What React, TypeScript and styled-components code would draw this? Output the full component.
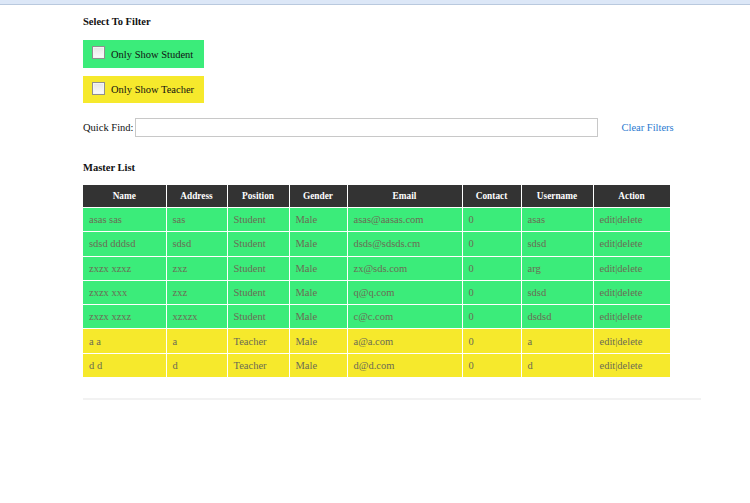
import React from "react";
import styled, { createGlobalStyle } from "styled-components";

const Global = createGlobalStyle`
  html, body { margin: 0; padding: 0; background: #fff; }
  body { font-family: "Liberation Serif", "Times New Roman", serif; color: #111; }
`;

const TopBar = styled.div`
  height: 4px;
  background: #dce7f7;
  border-bottom: 1px solid #b9c9de;
`;

const Page = styled.div`
  padding: 10px 0 0 83px;
  width: 618px;
`;

const Heading = styled.div`
  font-weight: bold;
  font-size: 10.5px;
  line-height: 14px;
  height: 14px;
`;

const FilterBox = styled.label<{ $bg: string; $h: number; $mt: number }>`
  display: flex;
  align-items: center;
  width: 121px;
  height: ${(p) => p.$h}px;
  background: ${(p) => p.$bg};
  margin-top: ${(p) => p.$mt}px;
  box-sizing: border-box;
  padding-left: 9px;
  font-size: 10.5px;
`;

const Check = styled.span`
  width: 11px;
  height: 11px;
  border: 1px solid #8f8f8f;
  background: linear-gradient(#e6e6e6, #fbfbfb);
  box-shadow: inset 0 0 0 1px #f4f4f4;
  margin-right: 6px;
  margin-top: -3px;
`;

const FindRow = styled.div`
  display: flex;
  align-items: center;
  margin-top: 14px;
  height: 20px;
  font-size: 10.5px;
`;

const FindInput = styled.div`
  width: 461px;
  height: 17px;
  border: 1px solid #c8c8c8;
  margin-left: 2px;
  background: #fff;
`;

const ClearLink = styled.a`
  margin-left: 23px;
  color: #2a7ad0;
  font-size: 10.5px;
  text-decoration: none;
  margin-top: 1px;
`;

const ListHeading = styled(Heading)`
  margin-top: 24px;
`;

const Table = styled.table`
  margin-top: 10px;
  border-collapse: collapse;
  width: 587px;
  table-layout: fixed;
  font-size: 10.5px;
`;

const Th = styled.th`
  background: #333;
  color: #fff;
  font-weight: bold;
  font-size: 9.3px;
  height: 22px;
  padding: 0;
  border: 1px solid #fff;
  border-top: none;
  text-align: center;
  &:first-child { border-left: none; }
`;

const Tr = styled.tr<{ $bg: string }>`
  background: ${(p) => p.$bg};
`;

const Td = styled.td`
  height: 23.3px;
  padding: 0 0 0 6px;
  color: #6b6b55;
  border: 1px solid #fff;
  white-space: nowrap;
  overflow: hidden;
  &:first-child { border-left: none; }
`;

const Rule = styled.div`
  margin-top: 20px;
  width: 618px;
  height: 2px;
  background: #f2f2f2;
`;

const GREEN = "#3bec7a";
const YELLOW = "#f6e92c";

const cols = [
  ["Name", 83],
  ["Address", 61],
  ["Position", 62],
  ["Gender", 58],
  ["Email", 115],
  ["Contact", 59],
  ["Username", 72],
  ["Action", 77],
] as const;

const rows = [
  ["asas sas", "sas", "Student", "Male", "asas@aasas.com", "0", "asas"],
  ["sdsd dddsd", "sdsd", "Student", "Male", "dsds@sdsds.cm", "0", "sdsd"],
  ["zxzx xzxz", "zxz", "Student", "Male", "zx@sds.com", "0", "arg"],
  ["zxzx xxx", "zxz", "Student", "Male", "q@q.com", "0", "sdsd"],
  ["zxzx xzxz", "xzxzx", "Student", "Male", "c@c.com", "0", "dsdsd"],
  ["a a", "a", "Teacher", "Male", "a@a.com", "0", "a"],
  ["d d", "d", "Teacher", "Male", "d@d.com", "0", "d"],
];

export default function App() {
  return (
    <>
      <Global />
      <TopBar />
      <Page>
        <Heading>Select To Filter</Heading>
        <FilterBox $bg={GREEN} $h={28} $mt={11}>
          <Check />
          Only Show Student
        </FilterBox>
        <FilterBox $bg={YELLOW} $h={27} $mt={8}>
          <Check />
          Only Show Teacher
        </FilterBox>
        <FindRow>
          Quick Find:
          <FindInput />
          <ClearLink href="#">Clear Filters</ClearLink>
        </FindRow>
        <ListHeading>Master List</ListHeading>
        <Table>
          <colgroup>
            {cols.map(([n, w]) => (
              <col key={n} style={{ width: w }} />
            ))}
          </colgroup>
          <thead>
            <tr>
              {cols.map(([n]) => (
                <Th key={n}>{n}</Th>
              ))}
            </tr>
          </thead>
          <tbody>
            {rows.map((r, i) => (
              <Tr key={i} $bg={r[2] === "Student" ? GREEN : YELLOW}>
                {r.map((c, j) => (
                  <Td key={j}>{c}</Td>
                ))}
                <Td>edit|delete</Td>
              </Tr>
            ))}
          </tbody>
        </Table>
        <Rule />
      </Page>
    </>
  );
}
